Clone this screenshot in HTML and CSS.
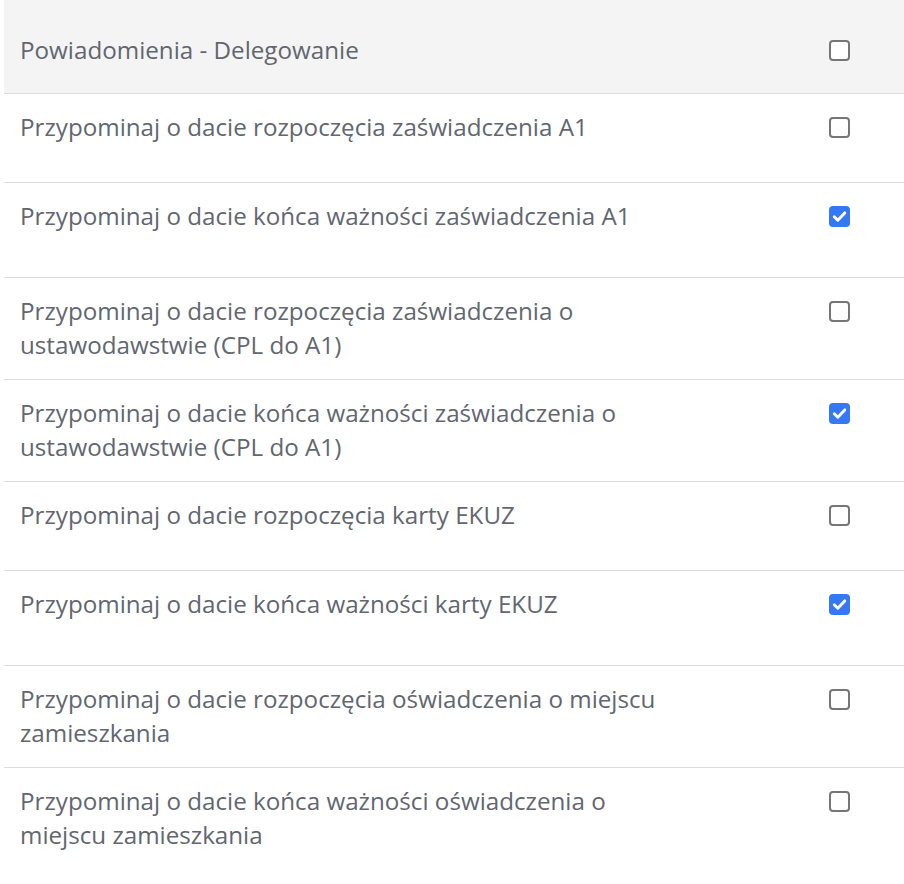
FILE: index.html
```html
<!DOCTYPE html>
<html lang="pl">
<head>
<meta charset="utf-8">
<title>Powiadomienia - Delegowanie</title>
<link rel="stylesheet" href="styles.css">
</head>
<body>
<div class="table">
  <div class="row head">
    <div class="label">Powiadomienia - Delegowanie</div>
    <div class="cell"><span class="box"></span></div>
  </div>
  <div class="row">
    <div class="label">Przypominaj o dacie rozpoczęcia zaświadczenia A1</div>
    <div class="cell"><span class="box"></span></div>
  </div>
  <div class="row on">
    <div class="label">Przypominaj o dacie końca ważności zaświadczenia A1</div>
    <div class="cell"><span class="box checked"><svg viewBox="0 0 20 20"><path d="M5 10.3 8.4 13.6 15 6.6"/></svg></span></div>
  </div>
  <div class="row">
    <div class="label">Przypominaj o dacie rozpoczęcia zaświadczenia o ustawodawstwie (CPL do A1)</div>
    <div class="cell"><span class="box"></span></div>
  </div>
  <div class="row on">
    <div class="label">Przypominaj o dacie końca ważności zaświadczenia o ustawodawstwie (CPL do A1)</div>
    <div class="cell"><span class="box checked"><svg viewBox="0 0 20 20"><path d="M5 10.3 8.4 13.6 15 6.6"/></svg></span></div>
  </div>
  <div class="row">
    <div class="label">Przypominaj o dacie rozpoczęcia karty EKUZ</div>
    <div class="cell"><span class="box"></span></div>
  </div>
  <div class="row on">
    <div class="label">Przypominaj o dacie końca ważności karty EKUZ</div>
    <div class="cell"><span class="box checked"><svg viewBox="0 0 20 20"><path d="M5 10.3 8.4 13.6 15 6.6"/></svg></span></div>
  </div>
  <div class="row">
    <div class="label">Przypominaj o dacie rozpoczęcia oświadczenia o miejscu zamieszkania</div>
    <div class="cell"><span class="box"></span></div>
  </div>
  <div class="row">
    <div class="label">Przypominaj o dacie końca ważności oświadczenia o miejscu zamieszkania</div>
    <div class="cell"><span class="box"></span></div>
  </div>
</div>
</body>
</html>
```

FILE: styles.css
```css
html, body {
  margin: 0;
  padding: 0;
  background: #ffffff;
}

body {
  font-family: "Open Sans", "Liberation Sans", sans-serif;
  font-size: 24.2px;
  line-height: 34px;
  color: #62666f;
}

.table {
  margin-left: 4px;
  width: 900px;
}

.row {
  display: flex;
  align-items: flex-start;
  box-sizing: border-box;
  min-height: 89px;
  padding: 16px 0 17px;
  border-top: 1px solid #dddddd;
}

.row.on {
  min-height: 95px;
}

.row.head {
  background: #f4f4f4;
  border-top: none;
  min-height: 93px;
  padding: 33px 0 26px;
}

.label {
  flex: 1;
  padding-left: 16px;
  padding-right: 114px;
}

.cell {
  width: 90px;
  margin-right: 20px;
  height: 34px;
  display: flex;
  align-items: center;
  justify-content: center;
}

.box {
  box-sizing: border-box;
  width: 21px;
  height: 21px;
  border: 2px solid #767676;
  border-radius: 4px;
  background: #ffffff;
  display: block;
}

.box.checked {
  border: none;
  background: #3478f6;
}

.box svg {
  display: block;
  width: 21px;
  height: 21px;
}

.box path {
  fill: none;
  stroke: #ffffff;
  stroke-width: 2.8;
  stroke-linecap: round;
  stroke-linejoin: round;
}
```
